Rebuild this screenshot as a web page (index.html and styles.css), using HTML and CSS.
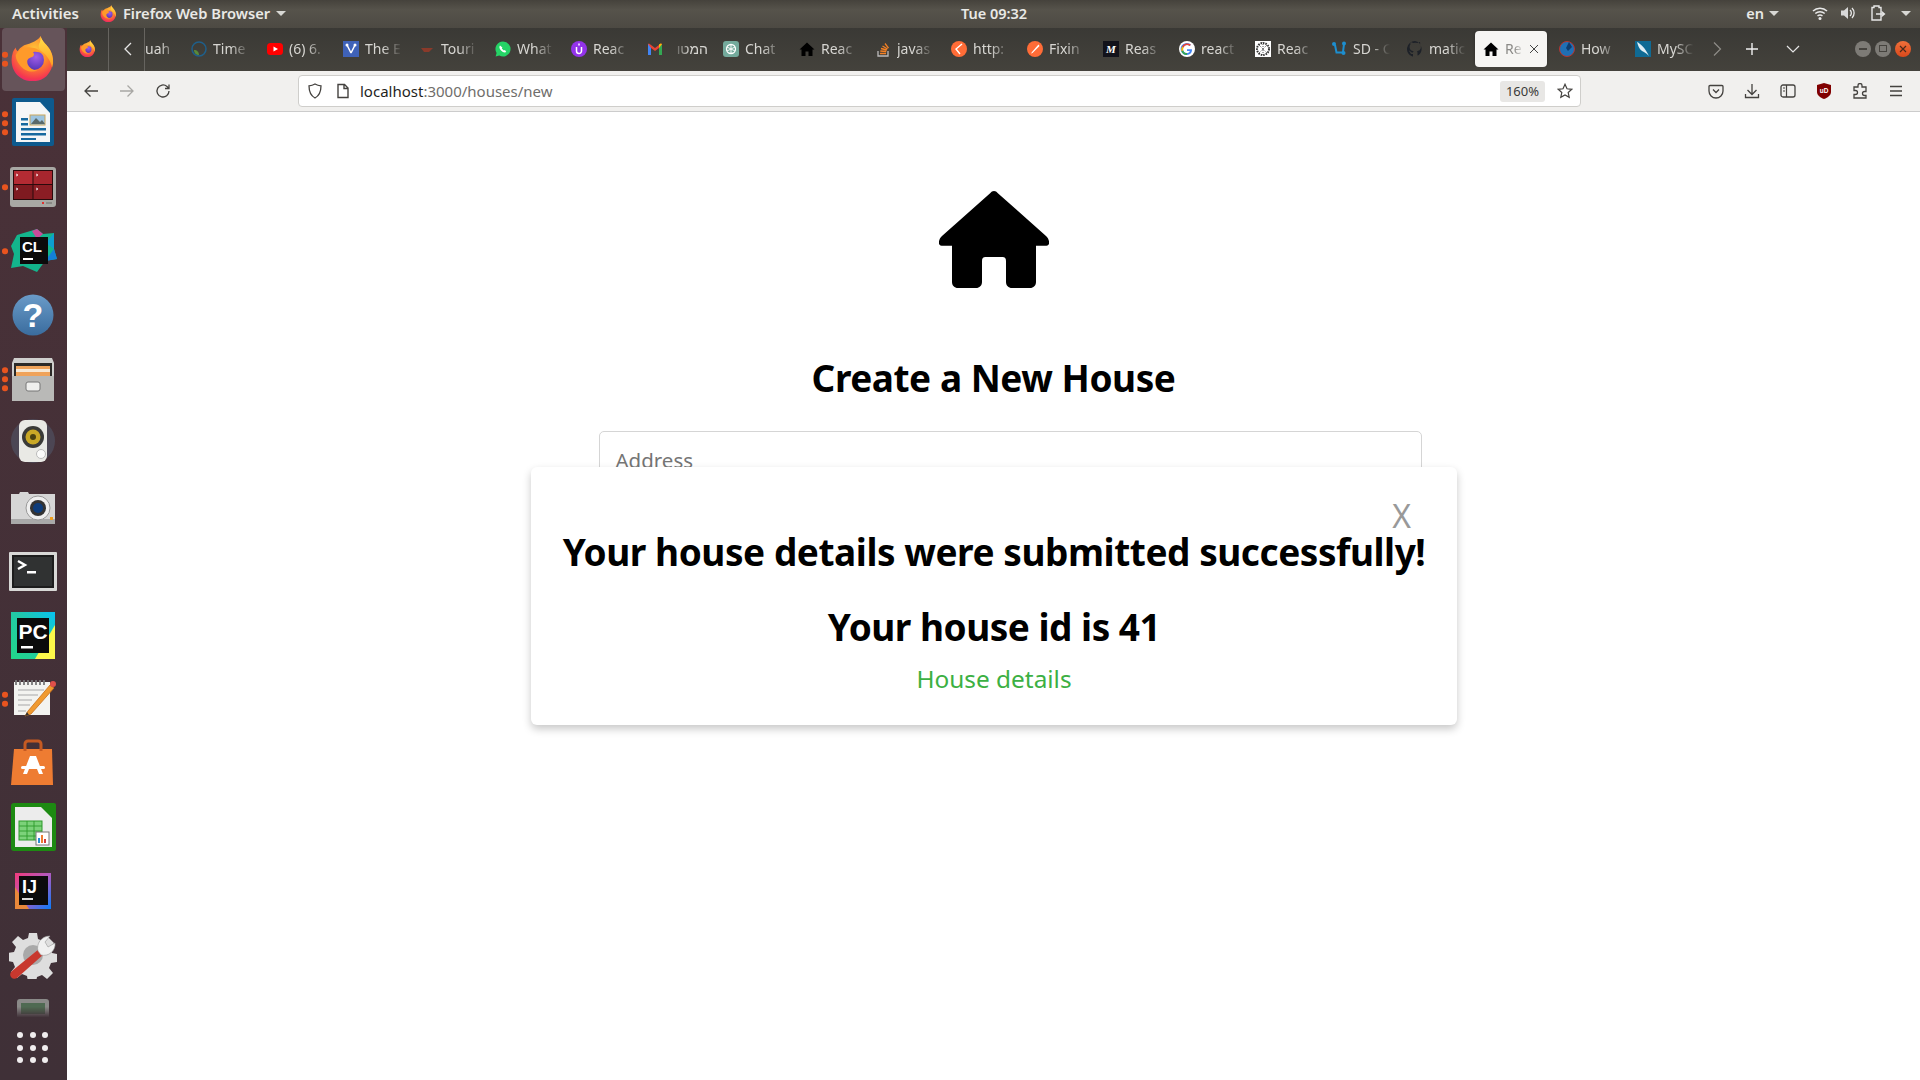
FILE: index.html
```html
<!DOCTYPE html>
<html lang="en">
<head>
<meta charset="utf-8">
<title>React App</title>
<link rel="stylesheet" href="styles.css">
</head>
<body>
<svg class="defs" width="0" height="0" aria-hidden="true">
  <defs>
    <radialGradient id="ffBase" cx="0.55" cy="0.3" r="0.8">
      <stop offset="0" stop-color="#ffc43a"/><stop offset="0.45" stop-color="#ff8a2a"/><stop offset="0.8" stop-color="#f5394f"/><stop offset="1" stop-color="#e31587"/>
    </radialGradient>
    <linearGradient id="ffFlame" x1="0" y1="0" x2="0" y2="1">
      <stop offset="0" stop-color="#ffe14a"/><stop offset="1" stop-color="#ff9a20"/>
    </linearGradient>
    <radialGradient id="ffGlobe" cx="0.6" cy="0.35" r="0.75">
      <stop offset="0" stop-color="#a25ee8"/><stop offset="1" stop-color="#4a2fb0"/>
    </radialGradient>
    <symbol id="firefox" viewBox="0 0 48 48">
      <path d="M32 1c1 6 7 9 10 15 5 9 3 20-4 27-8 7-21 7-29 0C2 37 0 27 3 18c1-2 2-4 3-5 0 2 1 3 2 4 3-5 7-7 12-8 5-2 10-4 12-8z" fill="url(#ffBase)"/>
      <path d="M32 1c1 6 7 9 10 15 3 6 4 12 2 18-2-8-6-13-11-17-3-2-4-6-2-9 1-2 1-5 1-7z" fill="url(#ffFlame)"/>
      <circle cx="25" cy="26" r="10.500" fill="url(#ffGlobe)"/>
      <path d="M6 21c3-6 9-9 15-8 6 0 11 3 13 7-3-2-7-3-10-2 2 2 1 4-1 5-4 1-5 3-5 5 0 5 5 9 11 9-7 3-15 0-19-6-2-3-4-6-4-10z" fill="#ff9a2a"/>
    </symbol>
    <symbol id="houseIcon" viewBox="0 0 16 16">
      <path d="M8 1.500L15.500 8.500H13.500V15H9.500V10.500H6.500V15H2.500V8.500H.5z" fill="#000"/>
    </symbol>
  </defs>
</svg>

<header class="topbar">
  <div class="top-left">
    <span class="top-item top-activities">Activities</span>
    <span class="top-app">
      <svg class="top-ff"><use href="#firefox"/></svg>
      <span class="top-item">Firefox Web Browser</span>
      <span class="caret"></span>
    </span>
  </div>
  <div class="clock">Tue 09:32</div>
  <div class="top-right">
    <span class="top-item">en</span><span class="caret caret-en"></span>
    <svg class="tray" viewBox="0 0 16 16"><path d="M1 6a10 10 0 0 1 14 0M3.300 8.500a7 7 0 0 1 9.400 0M5.500 11a4 4 0 0 1 5 0" fill="none" stroke="#e8e8e8" stroke-width="1.500"/><circle cx="8" cy="13.500" r="1.500" fill="#e8e8e8"/></svg>
    <svg class="tray" viewBox="0 0 16 16"><path d="M1 5.500h3L8 2v12L4 10.500H1z" fill="#d8d8d8"/><path d="M10 5a4 4 0 0 1 0 6M12 3a7 7 0 0 1 0 10" fill="none" stroke="#e8e8e8" stroke-width="1.300"/></svg>
    <svg class="tray tray-last" viewBox="0 0 16 16"><path d="M4 1h5v1.500h2V15H2V2.500h2z" fill="none" stroke="#e8e8e8" stroke-width="1.400"/><path d="M6 9h8M11.500 6.500L14.500 9l-3 2.500" fill="none" stroke="#e8e8e8" stroke-width="1.300"/></svg>
    <span class="caret caret-sys"></span>
  </div>
</header>

<div class="desktop">
  <nav class="dock">
    <ul class="dock-list">
      <li class="dock-item dock-active"><span class="dots dots-ff"><i></i><i></i></span>
        <svg class="dock-icon dock-ff"><use href="#firefox"/></svg></li>
      <li class="dock-item"><span class="dots"><i></i><i></i><i></i></span>
        <svg class="dock-icon dock-writer" viewBox="0 0 48 48"><path d="M5 0h38a2 2 0 0 1 2 2v44a2 2 0 0 1-2 2H5a2 2 0 0 1-2-2V2a2 2 0 0 1 2-2z" fill="#0d5a8e"/><path d="M7 4h24l10 11v29H7z" fill="#f4f6f7"/><path d="M33 2h10v11z" fill="#0d5a8e"/><path d="M12 20h7v2.500h-7zM12 25h7v2.500h-7zM12 30h25v2.500H12zM12 35h25v2.500H12zM12 40h15v2H12z" fill="#16699f"/><rect x="21" y="17" width="15" height="10" fill="#9cc4e0" stroke="#c9a55a"/><path d="M22 26l5-6 4 4 2-2 3 4z" fill="#5a6a6a"/></svg></li>
      <li class="dock-item"><span class="dots"><i></i></span>
        <svg class="dock-icon" viewBox="0 0 48 48"><rect x="1" y="4" width="46" height="40" rx="3" fill="#a8a8a4"/><rect x="4" y="7" width="40" height="30" fill="#2a0a0c"/><rect x="5" y="8" width="18.500" height="13" fill="#b42b33"/><rect x="24.500" y="8" width="18.500" height="13" fill="#a7262e"/><rect x="5" y="22" width="18.500" height="14" fill="#7f1a20"/><rect x="24.500" y="22" width="18.500" height="14" fill="#8b1d24"/><path d="M7 11l2 1-2 1M27 11l2 1-2 1M7 25l2 1-2 1M27 25l2 1-2 1" stroke="#fff" stroke-width=".8" fill="none"/><rect x="33" y="39" width="2" height="2" fill="#e03030"/><rect x="37" y="39" width="6" height="2" fill="#8a8a86"/></svg></li>
      <li class="dock-item"><span class="dots"><i></i></span>
        <svg class="dock-icon" viewBox="0 0 48 48"><path d="M8 8l20-6 6 5 11-1 0 16 3 10-12 2-8 11-14-6-12 2 3-14-3-8z" fill="#13b58c"/><path d="M28 2l6 5-6 5-5-8z" fill="#c94b9a"/><path d="M45 6v16l-8-6z" fill="#0d9fd0"/><path d="M45 22l3 10-12 2z" fill="#1480d8"/><rect x="11" y="10" width="28" height="27" fill="#0b0b0b"/><text class="logo-text" x="13" y="25" font-size="15">CL</text><rect x="14" y="31" width="10" height="2" fill="#fff"/></svg></li>
      <li class="dock-item">
        <svg class="dock-icon" viewBox="0 0 48 48"><defs><linearGradient id="helpG" x1="0" y1="0" x2="0" y2="1"><stop offset="0" stop-color="#6a9bc8"/><stop offset="1" stop-color="#3a6c9e"/></linearGradient></defs><circle cx="24" cy="24" r="20.500" fill="url(#helpG)"/><text class="logo-q" x="24" y="36" font-size="34" text-anchor="middle">?</text></svg></li>
      <li class="dock-item"><span class="dots"><i></i><i></i><i></i></span>
        <svg class="dock-icon" viewBox="0 0 48 48"><path d="M5 3h38l2 5v38H3V8z" fill="#cfcfcd"/><rect x="5" y="8" width="38" height="13" fill="#2c2a28"/><rect x="7" y="11" width="34" height="10" fill="#f0a35a"/><rect x="7" y="14" width="34" height="3" fill="#f7e9d6"/><rect x="3" y="21" width="42" height="25" fill="#b9b9b7"/><rect x="17" y="27" width="14" height="9" rx="2" fill="#efefed" stroke="#777"/></svg></li>
      <li class="dock-item">
        <svg class="dock-icon" viewBox="0 0 48 48"><circle cx="24" cy="22" r="22" fill="#5a6f8a" opacity=".35"/><rect x="10" y="1" width="28" height="42" rx="6" fill="#e9e9e5"/><circle cx="24" cy="18" r="11" fill="#3a3a38"/><circle cx="24" cy="18" r="7.500" fill="#c9a826"/><circle cx="24" cy="18" r="3" fill="#4a4210"/><circle cx="32" cy="35" r="4.500" fill="#fbfbfa" stroke="#bbb"/></svg></li>
      <li class="dock-item">
        <svg class="dock-icon" viewBox="0 0 48 48"><path d="M2 11h8l1-2h8l1 2h26v30H2z" fill="#d6d6d6"/><rect x="2" y="36" width="44" height="5" fill="#a9a9a9"/><circle cx="29" cy="25" r="12" fill="#efefef" stroke="#999"/><circle cx="29" cy="25" r="8" fill="#333"/><circle cx="29" cy="25" r="5" fill="#0e3c7a"/><rect x="41" y="34" width="3" height="3" fill="#f0a020"/></svg></li>
      <li class="dock-item">
        <svg class="dock-icon" viewBox="0 0 48 48"><rect x="0" y="5" width="48" height="39" rx="1" fill="#d8d8d6"/><rect x="3" y="8" width="42" height="33" fill="#1c1c1c"/><rect x="5" y="10" width="38" height="29" fill="#303232"/><path d="M9 14l7 4-7 4" fill="none" stroke="#fff" stroke-width="2.400"/><rect x="18" y="24" width="9" height="2.500" fill="#fff"/></svg></li>
      <li class="dock-item">
        <svg class="dock-icon" viewBox="0 0 48 48"><defs><linearGradient id="pcG" x1="0" y1="1" x2="1" y2="0"><stop offset="0" stop-color="#21d789"/><stop offset=".55" stop-color="#22c8a8"/><stop offset="1" stop-color="#07c3f2"/></linearGradient></defs><rect x="2" y="1" width="44" height="47" fill="url(#pcG)"/><path d="M46 14v34H26z" fill="#fcf84a"/><rect x="8" y="7" width="32" height="35" fill="#0b0b0b"/><text class="logo-text" x="9.500" y="28" font-size="21">PC</text><rect x="12" y="35" width="12" height="2.500" fill="#fff"/></svg></li>
      <li class="dock-item"><span class="dots"><i></i><i></i></span>
        <svg class="dock-icon" viewBox="0 0 48 48"><rect x="5" y="7" width="36" height="33" fill="#f3f3f0"/><path d="M7 5v5M11 5v5M15 5v5M19 5v5M23 5v5M27 5v5M31 5v5M35 5v5" stroke="#777" stroke-width="1.800"/><path d="M9 15h26M9 20h20M9 25h14M9 30h12M9 36h8" stroke="#a8a8a8" stroke-width="1.200"/><path d="M19 36l-3 5 6-2 23-26-4-3z" fill="#f09a30" stroke="#c9701a" stroke-width=".8"/><path d="M18 37l-2 4 4-1z" fill="#333"/><circle cx="44" cy="9" r="3" fill="#e0504a"/></svg></li>
      <li class="dock-item">
        <svg class="dock-icon" viewBox="0 0 48 48"><path d="M5 10h38l1 36H2z" fill="#ee7c32"/><path d="M16 12V5a3 3 0 0 1 3-3h10a3 3 0 0 1 3 3v7" fill="none" stroke="#c55a22" stroke-width="3"/><path d="M21 17h6l7 18h-4l-2-5h-8l-2 5h-4z" fill="#fff"/><rect x="12" y="27" width="24" height="3" rx="1.500" fill="#fff"/></svg></li>
      <li class="dock-item">
        <svg class="dock-icon" viewBox="0 0 48 48"><path d="M5 0h40a2 2 0 0 1 2 2v44a2 2 0 0 1-2 2H5a3 3 0 0 1-3-3V3a3 3 0 0 1 3-3z" fill="#1d8a12"/><path d="M6 4h26l11 11v29H6z" fill="#ececec"/><path d="M33 3h10v10z" fill="#1d8a12"/><rect x="10" y="18" width="23" height="19" fill="#7cd27a" stroke="#2c9a2a"/><path d="M10 23h23M10 28h23M10 33h23M18 18v19M25 18v19" stroke="#2c9a2a" stroke-width=".9"/><rect x="27" y="29" width="13" height="13" fill="#fff" stroke="#777"/><rect x="29" y="35" width="2" height="5" fill="#2a8ed4"/><rect x="32" y="32" width="2" height="8" fill="#ee7c32"/><rect x="35" y="36" width="2" height="4" fill="#d43c3c"/></svg></li>
      <li class="dock-item">
        <svg class="dock-icon" viewBox="0 0 48 48"><defs><linearGradient id="ijG" x1="0" y1="0" x2="1" y2="1"><stop offset="0" stop-color="#f23a7a"/><stop offset=".5" stop-color="#b05ac0"/><stop offset="1" stop-color="#087cfa"/></linearGradient></defs><rect x="6" y="6" width="36" height="36" fill="url(#ijG)"/><path d="M6 20v22h14z" fill="#e8883a"/><rect x="10" y="9" width="29" height="29" fill="#0b0b0b"/><text class="logo-text" x="13" y="26" font-size="18">IJ</text><rect x="13" y="31" width="11" height="2" fill="#ddd"/></svg></li>
      <li class="dock-item">
        <svg class="dock-icon" viewBox="0 0 48 48"><path d="M20 2h8l1 6 5 2 5-4 6 6-4 5 2 5 5 1v8l-6 1-2 5 4 5-6 6-5-4-5 2-1 5h-8l-1-6-5-2-5 4-6-6 4-5-2-5-5-1v-8l6-1 2-5-4-5 6-6 5 4 5-2z" fill="#dedede"/><circle cx="24" cy="24" r="10" fill="#a9a9a9"/><path d="M3 40l27-22 5 5-27 24a4 4 0 0 1-5-7z" fill="#c8382e"/><path d="M29 20c-2-7 3-15 12-15l-5 6 3 5 7-4c1 8-7 14-14 12z" fill="#f0f0f0" stroke="#999" stroke-width=".6"/></svg></li>
    </ul>
    <div class="dock-removable">
      <svg viewBox="0 0 32 24" width="32" height="24"><rect x="0" y="0" width="32" height="24" rx="3" fill="#8a8a88"/><rect x="4" y="4" width="24" height="11" fill="#4f6a52"/></svg>
    </div>
    <div class="dock-apps"><i></i><i></i><i></i><i></i><i></i><i></i><i></i><i></i><i></i></div>
  </nav>

  <div class="browser">
    <div class="tabbar">
      <svg class="ff-menu"><use href="#firefox"/></svg>
      <span class="sep sep-a"></span>
      <svg class="nav-chev" viewBox="0 0 16 16"><path d="M10 2L4 8l6 6" fill="none" stroke="#e6e6e6" stroke-width="1.300"/></svg>
      <span class="sep"></span>
      <div class="tabstrip">
        <div class="tab tab-first"><span class="tab-label">uah</span></div>
        <div class="tab"><svg class="fav" viewBox="0 0 16 16"><circle cx="8" cy="8" r="7" fill="none" stroke="#1f5f8a" stroke-width="1.500"/><path d="M3 9c3 0 5 2 5 5-3 0-5-2-5-5z" fill="#5a8a3a"/></svg><span class="tab-label">Time</span></div>
        <div class="tab"><svg class="fav" viewBox="0 0 16 16"><rect x="0" y="2" width="16" height="12" rx="3.500" fill="#f00"/><path d="M6.500 5.500l4.500 2.500-4.500 2.500z" fill="#fff"/></svg><span class="tab-label">(6) 6.</span></div>
        <div class="tab"><svg class="fav" viewBox="0 0 16 16"><rect width="16" height="16" fill="#3f62b8"/><path d="M4 4l4 8M12 4l-4 8" fill="none" stroke="#fff" stroke-width="1.500"/><circle cx="4" cy="4" r="1.500" fill="#fff"/><circle cx="12" cy="4" r="1.500" fill="#fff"/></svg><span class="tab-label">The E</span></div>
        <div class="tab"><svg class="fav" viewBox="0 0 16 16"><path d="M2 7h12l-4 4H5z" fill="#8a3a2a"/></svg><span class="tab-label">Touri</span></div>
        <div class="tab"><svg class="fav" viewBox="0 0 16 16"><path d="M8 .5a7.500 7.500 0 0 0-6.400 11.400L.6 15.500l3.700-1A7.500 7.500 0 1 0 8 .5z" fill="#25d366"/><path d="M5 4.500c-1 1-.8 3 1 5s4 2.500 5.200 1.500l-1.200-2-1.200.6-2-2 .6-1.200z" fill="#fff"/></svg><span class="tab-label">What</span></div>
        <div class="tab"><svg class="fav" viewBox="0 0 16 16"><circle cx="8" cy="8" r="8" fill="#9333ea"/><path d="M5.500 6v4a2.500 2.500 0 0 0 5 0V6" fill="none" stroke="#fff" stroke-width="1.500"/><path d="M8 2.500v2" stroke="#fff" stroke-width="1.500"/></svg><span class="tab-label">Reac</span></div>
        <div class="tab"><svg class="fav" viewBox="0 0 16 16"><path d="M1 3v11h3V7l4 3 4-3v7h3V3l-1-.5L8 7 2 2.500z" fill="#ea4335"/><path d="M1 3v11h3V7z" fill="#4285f4"/><path d="M12 7v7h3V3z" fill="#34a853"/><path d="M15 3l-3 4V3.500l1.500-1z" fill="#fbbc04"/></svg><span class="tab-label tab-rtl" dir="rtl">המטו</span></div>
        <div class="tab"><svg class="fav" viewBox="0 0 16 16"><rect width="16" height="16" rx="3" fill="#74aa9c"/><circle cx="8" cy="8" r="4.500" fill="none" stroke="#fff" stroke-width="1.300"/><path d="M8 3.500v9M4 6l8 4M12 6l-8 4" stroke="#fff" stroke-width=".9"/></svg><span class="tab-label">Chat</span></div>
        <div class="tab"><svg class="fav"><use href="#houseIcon"/></svg><span class="tab-label">Reac</span></div>
        <div class="tab"><svg class="fav" viewBox="0 0 16 16"><path d="M3 10v5h10v-5" fill="none" stroke="#bcbbbb" stroke-width="1.300"/><path d="M5 12.500h6M5.300 10l6 .5M6 7.500l5.800 1.500M7.500 5l5 3M10 2.500l3.500 4.700" stroke="#f48024" stroke-width="1.300"/></svg><span class="tab-label">javas</span></div>
        <div class="tab"><svg class="fav" viewBox="0 0 16 16"><circle cx="8" cy="8" r="8" fill="#ff6c37"/><path d="M11 3L5 8l4 5" fill="none" stroke="#fff" stroke-width="1.400"/></svg><span class="tab-label">http:</span></div>
        <div class="tab"><svg class="fav" viewBox="0 0 16 16"><circle cx="8" cy="8" r="8" fill="#ff6c37"/><path d="M11.500 3.500L5 11l-1 1.500 1.500-.5 7-7z" fill="#fff"/></svg><span class="tab-label">Fixin</span></div>
        <div class="tab"><svg class="fav" viewBox="0 0 16 16"><rect width="16" height="16" fill="#12121a"/><text class="fav-m" x="8" y="12" font-size="11" text-anchor="middle">M</text></svg><span class="tab-label">Reas</span></div>
        <div class="tab"><svg class="fav" viewBox="0 0 16 16"><circle cx="8" cy="8" r="8" fill="#fff"/><path d="M12.800 8.200H8v1.700h2.800c-.3 1.400-1.500 2.200-2.800 2.200a4 4 0 0 1 0-8c1 0 1.900.4 2.600 1l1.300-1.300A6 6 0 1 0 8 14c3 0 5-2.200 5-5.200z" fill="#4285f4"/><path d="M3 5.500L4.500 6.700A4 4 0 0 1 8 4c1 0 1.900.4 2.600 1l1.300-1.300A6 6 0 0 0 3 5.500z" fill="#ea4335"/><path d="M2.500 10.500L4.200 9.200A4 4 0 0 0 8 12.100l0 1.900a6 6 0 0 1-5.500-3.500z" fill="#34a853"/><path d="M2.500 10.500a6 6 0 0 1 .5-5l1.500 1.200a4 4 0 0 0-.3 2.500z" fill="#fbbc04"/></svg><span class="tab-label">react</span></div>
        <div class="tab"><svg class="fav" viewBox="0 0 16 16"><rect width="16" height="16" fill="#fff"/><circle cx="8" cy="8" r="6" fill="none" stroke="#333" stroke-width="2" stroke-dasharray="1.500 1"/><path d="M4 4l8 8M12 4l-8 8M8 1v14" stroke="#555" stroke-width="1" stroke-dasharray="1 1"/></svg><span class="tab-label">Reac</span></div>
        <div class="tab"><svg class="fav" viewBox="0 0 16 16"><path d="M4 4l1.500 7.500H12" fill="none" stroke="#1d8ecf" stroke-width="2"/><path d="M13 3l-1 8" stroke="#1d8ecf" stroke-width="2"/><circle cx="3" cy="3" r="2" fill="#1d8ecf"/><circle cx="13" cy="2.500" r="2" fill="#1d8ecf"/><circle cx="12.500" cy="12" r="2" fill="#1d8ecf"/></svg><span class="tab-label">SD - C</span></div>
        <div class="tab"><svg class="fav" viewBox="0 0 16 16"><path d="M8 0a8 8 0 0 0-2.500 15.600c.4 0 .5-.2.5-.4v-2.200c-2.200.4-2.700-.9-2.900-1.500-.1-.3-.5-1-.9-1.200-.3-.2-.7-.6 0-.6.700 0 1.200.6 1.300.9.800 1.300 2.100 1 2.600.7.100-.6.300-1 .5-1.200-2-.2-4-1-4-4.400 0-1 .4-1.800.9-2.400-.1-.2-.4-1.100.1-2.300 0 0 .8-.2 2.500 1a8 8 0 0 1 4.300 0c1.700-1.200 2.500-1 2.500-1 .5 1.200.2 2.100.1 2.300.6.600.9 1.400.9 2.400 0 3.400-2.100 4.200-4 4.400.3.300.6.800.6 1.600v2.400c0 .2.100.5.500.4A8 8 0 0 0 8 0z" fill="#1d2128"/></svg><span class="tab-label">matic</span></div>
        <div class="tab tab-active"><svg class="fav"><use href="#houseIcon"/></svg><span class="tab-label">Re</span><svg class="tab-close" viewBox="0 0 10 10"><path d="M1 1l8 8M9 1l-8 8" stroke="#444" stroke-width="1"/></svg></div>
        <div class="tab"><svg class="fav" viewBox="0 0 16 16"><circle cx="8" cy="8" r="7.500" fill="#1f6fb5" stroke="#b8342f"/><path d="M10 1l-3 6 2 3 4-4z" fill="#0e3c6e"/></svg><span class="tab-label">How</span></div>
        <div class="tab"><svg class="fav" viewBox="0 0 16 16"><rect width="16" height="16" fill="#0f6a94"/><path d="M2 1c4 2 8 6 12 14-3-3-5-4-7-5C4 8 3 4 2 1z" fill="#dfeef5"/></svg><span class="tab-label">MySC</span></div>
      </div>
      <svg class="bar-ico bar-next" viewBox="0 0 16 16"><path d="M5 1.500L11.500 8 5 14.500" fill="none" stroke="#8f8d88" stroke-width="1.200"/></svg>
      <svg class="bar-ico bar-plus" viewBox="0 0 16 16"><path d="M8 2v12M2 8h12" stroke="#f0f0f0" stroke-width="1.400"/></svg>
      <svg class="bar-ico bar-list" viewBox="0 0 16 16"><path d="M2 5l6 6 6-6" fill="none" stroke="#e6e6e6" stroke-width="1.200"/></svg>
      <div class="winbtns">
        <span class="winbtn"><i class="w-min"></i></span>
        <span class="winbtn"><i class="w-max"></i></span>
        <span class="winbtn winbtn-close"><svg viewBox="0 0 8 8" width="8" height="8"><path d="M1 1l6 6M7 1L1 7" stroke="#4a2a1a" stroke-width="1.200"/></svg></span>
      </div>
    </div>

    <div class="toolbar">
      <svg class="tool tool-back" viewBox="0 0 16 16"><path d="M15 8H2M7.500 2.500L2 8l5.500 5.500" fill="none" stroke="#44423f" stroke-width="1.300"/></svg>
      <svg class="tool tool-fwd" viewBox="0 0 16 16"><path d="M1 8h13M8.500 2.500L14 8l-5.500 5.500" fill="none" stroke="#a8a7a4" stroke-width="1.300"/></svg>
      <svg class="tool tool-reload" viewBox="0 0 16 16"><path d="M14 8a6 6 0 1 1-2-4.500L14 5.500M14 1.500v4h-4" fill="none" stroke="#44423f" stroke-width="1.300"/></svg>
      <div class="urlbar">
        <svg class="url-ico" viewBox="0 0 16 16"><path d="M8 1c2 1.200 4 1.700 6 1.800 0 6-1.800 10-6 12.200C3.800 12.800 2 8.800 2 2.800 4 2.700 6 2.200 8 1z" fill="none" stroke="#44423f" stroke-width="1.300"/></svg>
        <svg class="url-ico" viewBox="0 0 16 16"><path d="M3 1.500h6.500L13 5v9.500H3zM9 1.500V5.500h4" fill="none" stroke="#44423f" stroke-width="1.400"/></svg>
        <span class="url-text"><b>localhost</b>:3000/houses/new</span>
        <span class="zoom-badge">160%</span>
        <svg class="url-star" viewBox="0 0 16 16"><path d="M8 1.300l2 4.500 4.800.5-3.600 3.200 1 4.800L8 11.900l-4.200 2.400 1-4.800L1.200 6.300 6 5.800z" fill="none" stroke="#44423f" stroke-width="1.200"/></svg>
      </div>
      <div class="tool-right">
        <svg class="tool" viewBox="0 0 16 16"><path d="M2 2.500h12a1 1 0 0 1 1 1V8a7 7 0 0 1-14 0V3.500a1 1 0 0 1 1-1z" fill="none" stroke="#44423f" stroke-width="1.300"/><path d="M5 6.500l3 3 3-3" fill="none" stroke="#44423f" stroke-width="1.300"/></svg>
        <svg class="tool" viewBox="0 0 16 16"><path d="M8 1v10M3.500 7L8 11.500 12.500 7M1.500 11v3.500h13V11" fill="none" stroke="#44423f" stroke-width="1.300"/></svg>
        <svg class="tool" viewBox="0 0 16 16"><rect x="1" y="2" width="14" height="12" rx="2" fill="none" stroke="#44423f" stroke-width="1.300"/><path d="M6.500 2v12M3 5h2M3 8h2" stroke="#44423f" stroke-width="1.200"/></svg>
        <svg class="tool" viewBox="0 0 16 16"><path d="M8 0l7 2v7c0 3-3 5.500-7 7-4-1.500-7-4-7-7V2z" fill="#800000"/><text class="fav-ub" x="8" y="10" font-size="6.500" text-anchor="middle">uD</text></svg>
        <svg class="tool" viewBox="0 0 16 16"><path d="M6 2.500a2 2 0 0 1 4 0V4h4v4.500h-1.500a2 2 0 0 0 0 4H14V15H2v-3.500h1.500a2 2 0 0 0 0-4H2V4h4z" fill="none" stroke="#44423f" stroke-width="1.300"/></svg>
        <svg class="tool" viewBox="0 0 16 16"><path d="M2 3.500h12M2 8h12M2 12.500h12" stroke="#44423f" stroke-width="1.300"/></svg>
      </div>
    </div>

    <main class="page">
      <svg class="house" viewBox="0 0 110 97"><path d="M55 0c1.500 0 2.800.8 3.600 2L107 45c3 2.800 3.500 6.500 3 8-.6 1.400-2 1.800-4 1.800H97V91c0 3.500-2.500 6-6 6H73c-3.500 0-6-2.500-6-6V70c0-2.500-1-4-3.500-4h-17C44 66 43 67.500 43 70v21c0 3.500-2.500 6-6 6H19c-3.500 0-6-2.500-6-6V54.800H4c-2 0-3.400-.4-4-1.800-.5-1.500 0-5.200 3-8L51.400 2C52.200.8 53.500 0 55 0z" fill="#000"/></svg>
      <h1 class="page-title">Create a New House</h1>
      <div class="field"><span class="placeholder">Address</span></div>

      <section class="modal">
        <span class="modal-x">X</span>
        <h2 class="modal-title">Your house details were submitted successfully!</h2>
        <h2 class="modal-id">Your house id is 41</h2>
        <a class="modal-link" href="#">House details</a>
      </section>
    </main>
  </div>
</div>
</body>
</html>
```

FILE: styles.css
```css
* { box-sizing: border-box; }
html, body { margin: 0; height: 100%; overflow: hidden; }
body { font-family: "Noto Sans", "Open Sans", sans-serif; background: #fff; color: #000; display: flex; flex-direction: column; height: 1080px; }
.defs { position: absolute; }

/* top bar */
.topbar { height: 28px; flex: none; display: grid; grid-template-columns: 1fr auto 1fr; align-items: center; background: linear-gradient(#45423c, #56534b 35%, #4d4a43); color: #e9e9e6; font-size: 14.500px; font-weight: 600; padding: 0 12px 2px; }
.top-left { display: flex; align-items: center; gap: 21px; }
.top-activities { font-size: 15px; }
.top-app { display: flex; align-items: center; gap: 6px; }
.top-app .top-item { font-size: 14.700px; }
.top-ff { width: 17px; height: 19px; }
.top-item { white-space: nowrap; }
.caret { width: 0; height: 0; border-left: 5px solid transparent; border-right: 5px solid transparent; border-top: 5px solid #d8d8d4; }
.clock { margin-left: 68px; white-space: nowrap; }
.top-right { display: flex; align-items: center; justify-content: flex-end; }
.caret-en { margin: 0 33px 0 5px; }
.tray { width: 16px; height: 18px; margin-right: 12px; }
.tray-last { margin-left: 2px; margin-right: 15px; }
.caret-sys { margin-right: -3px; }

/* desktop */
.desktop { flex: 1; display: flex; min-height: 0; }
.dock { width: 67px; flex: none; background: linear-gradient(#4a3138, #3f3037); display: flex; flex-direction: column; overflow: hidden; }
.dock-list { list-style: none; margin: -1px 0 0; padding: 0; }
.dock-item { height: 64px; position: relative; display: flex; align-items: center; justify-content: center; }
.dock-active::before { content: ""; position: absolute; inset: 1px 2px 0 2px; background: #66545a; border-radius: 4px; }
.dock-icon { width: 48px; height: 48px; position: relative; margin-left: -1px; }
.dock-ff { width: 46px; height: 46px; margin-top: -3px; }
.dock-writer { margin-top: -3px; }
.dots { position: absolute; left: 2px; top: 50%; transform: translateY(-50%); display: flex; flex-direction: column; gap: 3.500px; }
.dots-ff { z-index: 1; }
.dots i { display: block; width: 5.500px; height: 5.500px; border-radius: 50%; background: #e9541f; }
.logo-text { font-family: "Liberation Sans", sans-serif; font-weight: 700; fill: #fff; }
.logo-q { font-family: "Liberation Sans", sans-serif; font-weight: 700; fill: #fff; }
.dock-removable { height: 36px; display: flex; justify-content: center; padding-top: 12px; margin-left: -1px; -webkit-mask-image: linear-gradient(#000 55%, transparent 85%); mask-image: linear-gradient(#000 55%, transparent 85%); }
.dock-apps { margin: 9px auto 0; display: grid; grid-template-columns: repeat(3, 6px); gap: 6.500px; transform: translateX(-1px); }
.dock-apps i { width: 6px; height: 6px; border-radius: 50%; background: #f0edee; }

/* browser */
.browser { flex: 1; min-width: 0; display: flex; flex-direction: column; }
.tabbar { height: 43px; flex: none; display: flex; align-items: center; padding-bottom: 2px; background: linear-gradient(#3a3935, #44423c); color: #d7d6d2; }
.ff-menu { width: 17px; height: 19px; margin-left: 12px; flex: none; }
.sep { width: 1px; height: 43px; margin-bottom: -2px; background: #66645f; flex: none; }
.sep-a { margin-left: 12px; }
.nav-chev { width: 16px; height: 16px; margin: 0 7px 0 12px; flex: none; }
.tabstrip { width: 1555px; flex: none; display: flex; overflow: hidden; height: 36px; }
.tab { width: 72px; height: 36px; margin: 0 2px; flex: none; display: flex; align-items: center; padding-left: 8px; gap: 6px; border-radius: 4px; position: relative; }
.tab-first { width: 34px; margin: 0 2px 0 0; padding-left: 0; }
.fav { width: 16px; height: 16px; flex: none; }
.fav-m { font-family: "Liberation Serif", serif; font-style: italic; font-weight: 700; fill: #fff; }
.fav-ub { font-family: "Liberation Sans", sans-serif; font-weight: 700; fill: #fff; }
.tab-label { font-size: 14px; white-space: nowrap; overflow: hidden; width: 39px; -webkit-mask-image: linear-gradient(90deg, #000 45%, transparent 95%); mask-image: linear-gradient(90deg, #000 45%, transparent 95%); font-family: "Noto Sans", sans-serif; }
.tab-rtl { font-family: "Liberation Sans", sans-serif; -webkit-mask-image: linear-gradient(270deg, #000 45%, transparent 95%); mask-image: linear-gradient(270deg, #000 45%, transparent 95%); }
.tab-first .tab-label { width: 34px; }
.tab-active { background: #f6f5f3; color: #8a8986; box-shadow: 0 0 3px rgba(0,0,0,.3); }
.tab-active .tab-label { width: 20px; }
.tab-close { width: 10px; height: 10px; position: absolute; right: 8px; top: 13px; }
.bar-ico { width: 16px; height: 16px; flex: none; }
.bar-next { margin-left: 9px; }
.bar-plus { margin-left: 19px; }
.bar-list { margin-left: 25px; }
.winbtns { display: flex; gap: 4px; margin-left: 54px; }
.winbtn { width: 16px; height: 16px; border-radius: 50%; background: #7d7b76; display: flex; align-items: center; justify-content: center; }
.winbtn-close { background: linear-gradient(#f0703a, #d9491c); }
.w-min { width: 8px; height: 2px; background: #45433e; }
.w-max { width: 8px; height: 7px; border: 1.500px solid #45433e; }

/* toolbar */
.toolbar { height: 41px; flex: none; display: flex; align-items: center; background: #f1f0ee; border-bottom: 1px solid #ccc; }
.tool { width: 16px; height: 16px; flex: none; }
.tool-back { margin-left: 16px; }
.tool-fwd { margin-left: 20px; }
.tool-reload { margin-left: 20px; }
.urlbar { width: 1283px; height: 32px; margin-left: 127px; display: flex; align-items: center; background: #fff; border: 1px solid #cfcecb; border-radius: 4px; padding-left: 8px; gap: 12px; flex: none; }
.url-ico { width: 16px; height: 16px; flex: none; }
.url-text { font-size: 15px; color: #6f6e6b; margin-left: -3px; flex: 1; white-space: nowrap; }
.url-text b { font-weight: 400; color: #1f1f1e; }
.zoom-badge { font-size: 13px; background: #e8e7e5; color: #3a3a38; border-radius: 3px; width: 45px; height: 21px; display: flex; align-items: center; justify-content: center; }
.url-star { width: 16px; height: 16px; margin-right: 7px; flex: none; }
.tool-right { display: flex; margin-left: 127px; gap: 20px; }

/* page */
.page { flex: 1; position: relative; display: flex; flex-direction: column; align-items: center; padding-top: 79px; background: #fff; overflow: hidden; }
.house { width: 110px; height: 97px; flex: none; }
.page-title { font-size: 37px; font-weight: 700; line-height: 50px; letter-spacing: -.47px; margin: 65px 0 0; text-align: center; }
.field { width: 823px; height: 80px; margin: 28px 0 0 33px; border: 1px solid #d5d5d5; border-radius: 5px; padding: 14px 16px; flex: none; }
.placeholder { font-size: 20.500px; color: #757575; line-height: 28px; display: block; }
.modal { position: absolute; top: 355px; left: 464px; width: 926px; height: 258px; background: #fff; border-radius: 6px; box-shadow: 0 4px 8px rgba(0,0,0,.22); display: flex; flex-direction: column; align-items: center; }
.modal-x { position: absolute; right: 46px; top: 35px; font-size: 32px; line-height: 28px; color: #999; }
.modal-title { font-size: 37px; font-weight: 700; line-height: 44px; letter-spacing: -.45px; margin: 63px 0 0; white-space: nowrap; }
.modal-id { font-size: 37px; font-weight: 700; line-height: 50px; letter-spacing: -.5px; margin: 28px 0 0; white-space: nowrap; }
.modal-link { font-size: 24.400px; line-height: 32px; margin-top: 11px; color: #3cb043; text-decoration: none; }
```
